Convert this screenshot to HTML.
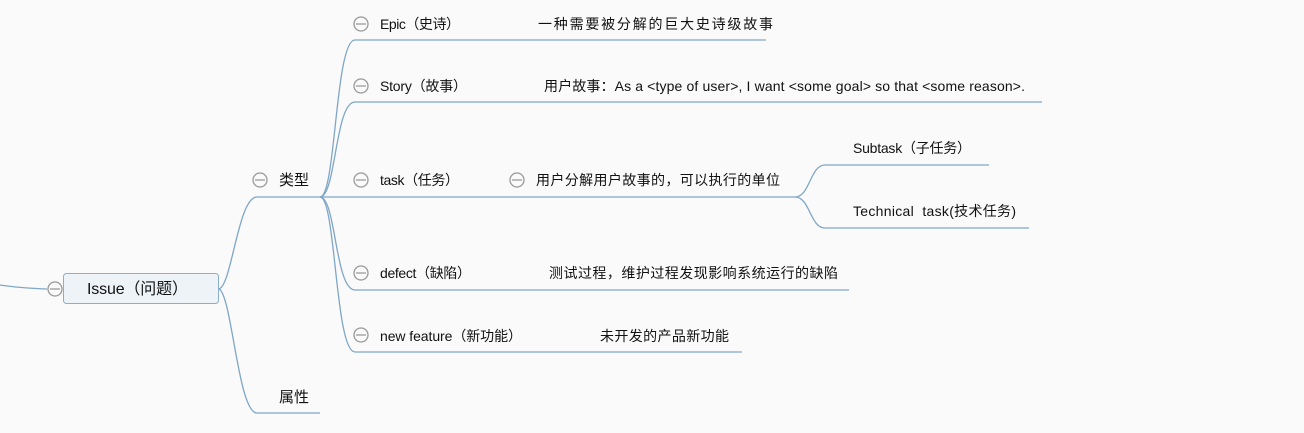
<!DOCTYPE html>
<html><head><meta charset="utf-8"><style>
html,body{margin:0;padding:0;background:#fafafa;}
svg{display:block}
text{font-family:"Liberation Sans","Noto Sans CJK SC",sans-serif;font-size:14px;fill:#111;}
</style></head><body>
<svg width="1304" height="433" viewBox="0 0 1304 433" xmlns="http://www.w3.org/2000/svg">
<g fill="none" stroke="#7fa6c6" stroke-width="1.3">
<path d="M0 285 Q20 288 47 289"/>
<path d="M219 289 C232 285 238 197 257 197 L320 197"/>
<path d="M219 289 C232 295 238 413 257 413 L320 413"/>
<path d="M320 197 C336 197 335 40 355 40 L766 40"/>
<path d="M320 197 C336 197 335 102 355 102 L1042 102"/>
<path d="M320 197 L795 197"/>
<path d="M320 197 C336 197 335 290 355 290 L849 290"/>
<path d="M320 197 C336 197 335 352 355 352 L742 352"/>
<path d="M795 197 C810 197 810 165 825 165 L989 165"/>
<path d="M795 197 C810 197 810 228 825 228 L1029 228"/>
</g>
<rect x="63.5" y="273.5" width="155" height="30" rx="3" fill="#eef3f7" stroke="#8aaecb"/>
<g fill="#fafafa" stroke="#999" stroke-width="1.3">
<circle cx="55" cy="289" r="7"/>
<circle cx="260" cy="180" r="7"/>
<circle cx="361" cy="24" r="7"/>
<circle cx="361" cy="86" r="7"/>
<circle cx="361" cy="180" r="7"/>
<circle cx="517" cy="180" r="7"/>
<circle cx="361" cy="273" r="7"/>
<circle cx="361" cy="335" r="7"/>
</g>
<g stroke="#999" stroke-width="1.3">
<path d="M50 289h10M255 180h10M356 24h10M356 86h10M356 180h10M512 180h10M356 273h10M356 335h10"/>
</g>
<text x="87" y="294" style="font-size:16px" textLength="101" lengthAdjust="spacing">Issue（问题）</text>
<text x="279" y="185" style="font-size:15px">类型</text>
<text x="279" y="402" style="font-size:15px">属性</text>
<text x="380" y="29" textLength="80" lengthAdjust="spacing">Epic（史诗）</text>
<text x="538" y="29" textLength="235" lengthAdjust="spacing">一种需要被分解的巨大史诗级故事</text>
<text x="380" y="91" textLength="87" lengthAdjust="spacing">Story（故事）</text>
<text x="544" y="91" textLength="481" lengthAdjust="spacing">用户故事：As a &lt;type of user&gt;, I want &lt;some goal&gt; so that &lt;some reason&gt;.</text>
<text x="380" y="185" textLength="79" lengthAdjust="spacing">task（任务）</text>
<text x="536" y="185" textLength="244" lengthAdjust="spacing">用户分解用户故事的，可以执行的单位</text>
<text x="853" y="153" textLength="118" lengthAdjust="spacing">Subtask（子任务）</text>
<text x="853" y="216" textLength="163" lengthAdjust="spacing">Technical&#160; task(技术任务)</text>
<text x="380" y="278" textLength="91" lengthAdjust="spacing">defect（缺陷）</text>
<text x="549" y="278" textLength="289" lengthAdjust="spacing">测试过程，维护过程发现影响系统运行的缺陷</text>
<text x="380" y="341" textLength="142" lengthAdjust="spacing">new feature（新功能）</text>
<text x="600" y="341" textLength="129" lengthAdjust="spacing">未开发的产品新功能</text>
</svg>
</body></html>
